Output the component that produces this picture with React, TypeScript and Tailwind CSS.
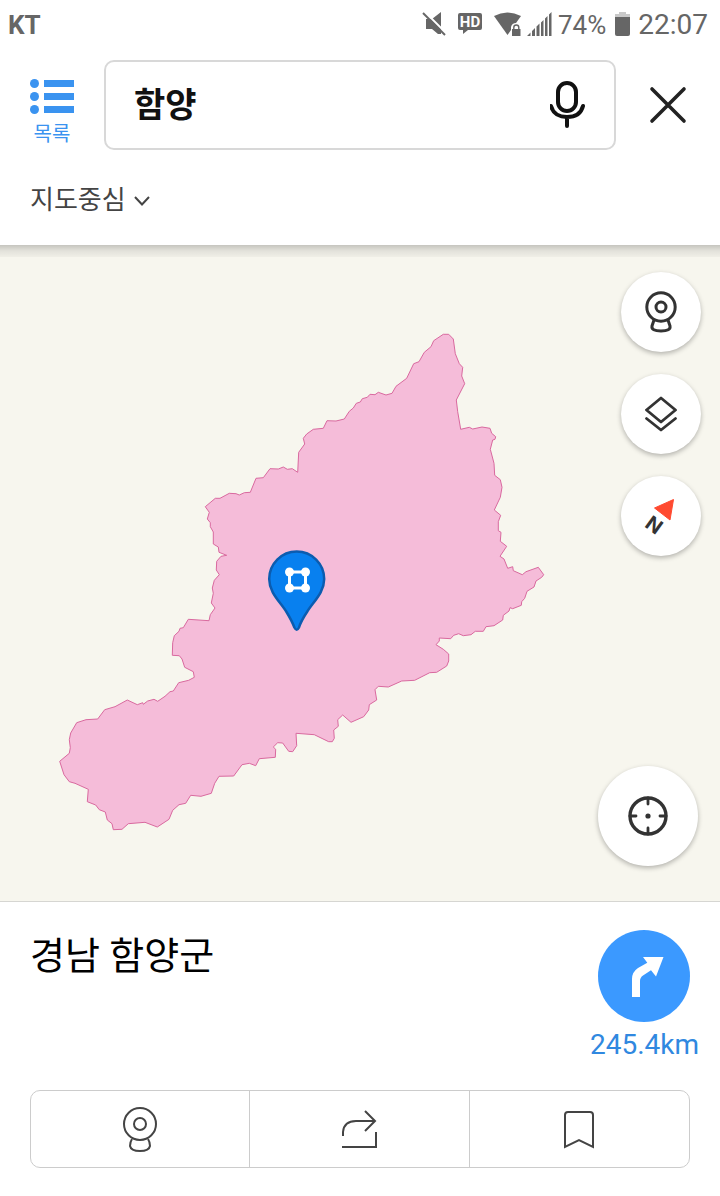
import { useState, type ReactNode } from 'react';

const FONT = "font-['Roboto','Noto_Sans_CJK_KR',sans-serif]";

// Administrative boundary of the county, in map canvas coordinates.
const BOUNDARY =
  'M443.3 334.3L448.7 334.3 453.3 339 455.3 353.7 459.3 363.7 462.7 367.3 461.7 376 464.7 383.7 456.3 400 457.7 411.7 460.7 429.3 469.3 427.3 472.7 429 482 427 490 428.3 491.7 433.3 495.7 436.7 495 439.3 492.7 440 490.3 449.3 494 463.3 494.7 475.3 500.3 479.7 502 487.3 500.3 497.3 494.3 510 500.7 515.3 498.3 521.7 498.3 530.7 501 532.3 500.3 541.3 506.7 546.3 ' +
  '500 556.3 504 559 507.7 568.3 512.7 566.7 513.3 570.7 522.3 574.7 526 571.7 538.3 567.3 543.7 574.7 541.7 577.3 536 581 534 587 527 591.3 524.7 598.3 521.7 601.7 521.3 605.3 512.7 608.7 510 607.7 509 611 503.3 615.3 502.7 620 494 625.7 486 626.7 483.3 631.3 475.3 631.3 471 634.7 463.3 635.7 458.7 633.7 453.7 635.3 450.7 638.7 439.3 638 439.3 641 436 644.7 443.3 649.3 448.7 654 448.7 661 446.7 666 436.7 672.3 429.7 672.7 414.7 680.3 401.7 681 388.3 687 378.3 686.3 375 689.7 376.7 700 369.3 704.7 368.7 710 363.7 716.7 351 722.3 342.7 715 337.7 719.7 338.3 726.3 333.7 730 334.3 738.3 332.3 741.7 328.7 741.7 314.3 734.7 ' +
  '296 733.3 296.7 745.7 292.7 751.7 288.7 751.3 282.7 743 277.7 742.7 273.3 747 275.7 749.3 275.3 757.3 259.3 758.7 255.7 765.7 249.3 763.3 242 764.7 233.7 776 219 776.3 214.7 783.3 211.3 793.3 201 796.3 190.7 795.3 185.7 803.3 179 804.7 172.7 810.3 169 819.3 157.3 827 145 822.3 128.3 823.7 122 829.3 113.3 829.7 112 823.7 107.3 820 105.3 812 99.3 809.7 95.7 805 87.3 801.7 88.3 789.3 75 783.3 69.3 781.7 64 774.7 59.7 761.3 69.3 753.3 70.3 747.7 69.3 739.7 70.7 733 76.7 722.7 86 719.7 97.7 719 104.7 709.7 115 706.7 127.3 700 137.3 704.7 142.7 702.7 143.3 704.3 147.7 701 154 699.3 157.7 701.3 165 696.3 170 691.7 173.3 691 178.7 682.7 188.7 680.3 194.3 677.3 193.3 671.7 184.7 667.3 182 659 179.3 655.7 172.3 655.3 172.7 642.7 174.3 635.7 179 631.3 180 628.3 183.3 627.7 188.3 619.3 209 620.7 210.3 614.7 215 608 211.3 603 213.3 593.3 212.3 588 214.3 580.3 219.3 574.7 216.3 570 216.7 561.3 221 556.3 226.7 555.3 219 552.3 218.3 547 213.3 544 213.3 532 210.3 526.7 210.3 522.7 207.3 519 209.3 512.3 205.3 506.7 215.3 498.3 220 498.3 229.3 493.3 236 493.7 239.3 495 244.3 492.7 ' +
  '250.3 492.3 256 478.3 263.3 477.7 270 468.7 278.3 469 283.3 467 287.3 469.3 292.3 468.7 297.7 472.3 298.7 452.3 304.7 444 303.3 438.3 306.7 434 313.3 429.3 323.3 428.3 327 420.7 336 421 344.3 419 349.3 411.3 353.3 408 356.3 403.3 360.3 402 362.3 398.7 367.3 397.3 370 394.3 375 394.7 378.3 392.3 386 395 392 393.3 396 386.3 406.7 378.3 413.7 363.7 419 361.7 424.3 352.3 431 346.7 433.7 340.7Z';

function StatusBar() {
  return (
    <div className="flex h-[50px] items-center pr-3 pl-2 text-[#666]">
      <span className="flex-1 text-[26px] font-bold">KT</span>
      <svg className="mr-[11px] h-[26px] w-[25px]" viewBox="0 0 25 26">
        <path d="M4 7H10L19 0V22H16L10 17H4Z" fill="currentColor" />
        <path d="M2 -1L25 22" stroke="#fff" strokeWidth="2" />
        <path d="M1 1L23 23" stroke="currentColor" strokeWidth="2" />
      </svg>
      <svg className="mr-3 h-[26px] w-6" viewBox="0 0 24 26">
        <path d="M2 1H22Q24 1 24 3V16Q24 18 22 18H10L5 22V18H2Q0 18 0 16V3Q0 1 2 1Z" fill="currentColor" />
        <text x="12" y="15" textAnchor="middle" fill="#fff" fontSize="15" fontWeight="700">
          HD
        </text>
      </svg>
      <svg className="mr-[6px] h-[26px] w-[27px]" viewBox="0 0 27 26">
        <path d="M0 4Q13 -3 27 4L13.500 23Z" fill="currentColor" />
        <path d="M17 15Q18 11 22 11T27 15V26H17Z" fill="#fff" />
        <path d="M18 17H26.500V24H18Z" fill="currentColor" />
        <path d="M19.800 17V15.500A2.500 2.500 0 0 1 24.800 15.500V17" fill="none" stroke="currentColor" strokeWidth="1.400" />
      </svg>
      <svg className="mr-[6px] h-[26px] w-[25px]" viewBox="0 0 25 26">
        <path
          d="M0 24L3.500 20.500V24ZM5 24V19L8 16V24ZM9.500 24V14.500L12.500 11.500V24ZM14 24V10.500L16.500 8V24ZM18 24V6.500L20.500 4V24ZM22 24V2.500L24.500 0V24Z"
          fill="currentColor"
        />
      </svg>
      <span className="mr-[9px] text-[26px]">74%</span>
      <svg className="mr-2 h-[26px] w-[15px]" viewBox="0 0 15 26">
        <path d="M4 0H11V2H15V6H0V2H4Z" fill="#c9c9c9" />
        <path d="M0 5H15V22Q15 24 13 24H2Q0 24 0 22Z" fill="currentColor" />
      </svg>
      <span className="text-[28px]">22:07</span>
    </div>
  );
}

function SearchHeader() {
  const [query, setQuery] = useState('함양');

  return (
    <div className="flex items-start pt-[10px] pr-[33px] pl-[30px]">
      <button type="button" className="mt-[19px] mr-[30px] flex w-11 flex-col items-center text-[#3a93f0]">
        <svg className="h-9 w-11" viewBox="0 0 44 36" fill="currentColor">
          <circle cx="4.500" cy="4.500" r="4.500" />
          <circle cx="4.500" cy="17.500" r="4.500" />
          <circle cx="4.500" cy="30.500" r="4.500" />
          <path d="M14 1H44V8H14ZM14 14H44V21H14ZM14 27H44V34H14Z" />
        </svg>
        <span className="text-[20px] leading-[38px]">목록</span>
      </button>
      <div className="flex h-[90px] min-w-0 flex-1 items-center rounded-[10px] border-2 border-[#d8d8d8] pr-7 pl-7">
        <input
          type="text"
          aria-label="검색"
          value={query}
          onChange={(e) => setQuery(e.target.value)}
          className="min-w-0 flex-1 bg-transparent text-[34px] font-bold text-[#111] outline-none"
        />
        <button type="button" aria-label="음성 검색">
          <svg className="h-12 w-9" viewBox="0 0 36 48" fill="none" stroke="#111" strokeWidth="4" strokeLinecap="round">
            <rect x="8" y="2" width="18" height="28" rx="9" />
            <path d="M1 25C3 33 9 36 17 36S31 33 33 25M17 36V45" />
          </svg>
        </button>
      </div>
      <button type="button" aria-label="닫기" className="ml-[33px] flex h-[90px] items-center">
        <svg className="h-[38px] w-[38px]" viewBox="0 0 38 38" stroke="#222" strokeWidth="3.600" strokeLinecap="round">
          <path d="M3 3L35 35M35 3L3 35" />
        </svg>
      </button>
    </div>
  );
}

function SortSelect() {
  return (
    <div className="flex h-[92px] items-center px-[30px] pt-[2px]">
      <div className="relative">
        <select aria-label="정렬 기준" className="appearance-none bg-transparent pr-[26px] text-[26px] text-[#444] outline-none">
          <option>지도중심</option>
        </select>
        <svg
          className="pointer-events-none absolute inset-y-0 right-0 my-auto h-4 w-5"
          viewBox="0 0 20 16"
          fill="none"
          stroke="#444"
          strokeWidth="2"
        >
          <path d="M3 5L10 12.500L17 5" />
        </svg>
      </div>
    </div>
  );
}

function MapButton({ label, className, children }: { label: string; className: string; children: ReactNode }) {
  return (
    <button
      type="button"
      aria-label={label}
      className={`flex items-center justify-center rounded-full bg-white shadow-[0_2px_5px_rgba(0,0,0,0.28)] ${className}`}
    >
      {children}
    </button>
  );
}

function MapCanvas() {
  return (
    <main className="relative min-h-[600px] flex-1 overflow-hidden bg-[#f7f6ee]">
      <svg className="absolute inset-0 h-full w-full" viewBox="0 245 720 656">
        <path d={BOUNDARY} fill="#f5bcd9" stroke="#d9699f" strokeWidth="1" />
        <path
          d="M296.700 551.500A27.500 27.500 0 0 1 324.200 579C324.200 593 313 602 307 612Q301 621 299 627.500Q296.700 632 294.400 627.500Q292 621 286.500 612C280.500 602 269.200 593 269.200 579A27.500 27.500 0 0 1 296.700 551.500Z"
          fill="#0880ef"
          stroke="#0b5cb0"
          strokeWidth="2.500"
        />
        <rect x="289.500" y="572" width="16" height="16" fill="none" stroke="#fff" strokeWidth="3" />
        <g fill="#fff">
          <circle cx="289.500" cy="572" r="4.500" />
          <circle cx="305.500" cy="572" r="4.500" />
          <circle cx="289.500" cy="588" r="4.500" />
          <circle cx="305.500" cy="588" r="4.500" />
        </g>
      </svg>

      <div className="absolute inset-x-0 top-0 h-3 bg-linear-to-b from-black/20 via-black/8 to-black/3" />

      <div className="absolute top-[27px] right-[19px] flex flex-col gap-[22px]">
        <MapButton label="거리뷰" className="size-20">
          <svg className="h-[42px] w-8" viewBox="0 0 32 42" fill="none" stroke="#333" strokeWidth="3">
            <circle cx="16" cy="16" r="14.200" />
            <circle cx="16" cy="16" r="5" />
            <path d="M9 29L7 35Q6 40 16 40T25 35L23 29" />
          </svg>
        </MapButton>
        <MapButton label="지도 종류" className="size-20">
          <svg
            className="h-9 w-8"
            viewBox="0 0 32 36"
            fill="none"
            stroke="#333"
            strokeWidth="2.800"
            strokeLinecap="round"
            strokeLinejoin="round"
          >
            <path d="M16 2L30.500 14L16 26L1.500 14ZM1.500 22.500L16 34L30.500 22.500" />
          </svg>
        </MapButton>
        <MapButton label="나침반" className="size-20">
          <svg className="h-20 w-20" viewBox="0 0 80 80">
            <path d="M33.500 32L52.500 23.500L49 44Z" fill="#ff4a30" stroke="#ff4a30" strokeLinejoin="round" />
            <text
              x="33"
              y="56"
              textAnchor="middle"
              transform="rotate(36 33 49)"
              fill="#333"
              fontFamily="Inter, sans-serif"
              fontSize="20"
              fontWeight="700"
            >
              N
            </text>
          </svg>
        </MapButton>
      </div>

      <MapButton label="현재 위치" className="absolute right-[22px] bottom-[35px] size-[100px]">
        <svg className="h-10 w-10" viewBox="0 0 40 40" fill="none" stroke="#333" strokeWidth="3.400">
          <circle cx="20" cy="20" r="18" />
          <path d="M20 2V8M20 32V38M2 20H8M32 20H38" strokeWidth="2.800" strokeLinecap="round" />
          <circle cx="20" cy="20" r="2.600" fill="#333" stroke="none" />
        </svg>
      </MapButton>
    </main>
  );
}

function PlaceSheet() {
  return (
    <section className="border-t border-[#d6d6d2] bg-white pb-7">
      <div className="flex items-start justify-between pt-7 pr-[21px] pl-[30px]">
        <h1 className="text-[38px] leading-[52px] text-black">경남 함양군</h1>
        <a href="#route" className="flex flex-col items-center text-[#3088e0]">
          <span className="size-[92px] rounded-full bg-[#3b99ff]">
            <svg className="h-full w-full" viewBox="-34 -27 92 92">
              <path
                d="M0 40V22Q0 15 6 11L15.300 5.700L11 0H31.500L24 19.500L19 13.300L11 18.500Q8 20.500 8 24V40Z"
                fill="#fff"
              />
            </svg>
          </span>
          <span className="text-[28px] leading-[46px]">245.4km</span>
        </a>
      </div>

      <div className="mx-[30px] mt-[22px] grid h-[78px] grid-cols-3 divide-x divide-[#ccc] rounded-[10px] border border-[#ccc]">
        <button type="button" aria-label="거리뷰" className="flex items-center justify-center">
          <svg className="h-[46px] w-9" viewBox="0 0 36 46" fill="none" stroke="#444" strokeWidth="2">
            <circle cx="18" cy="18" r="16" />
            <circle cx="18" cy="18" r="6" />
            <path d="M10 33Q8 36 8 40Q9 45 18 45T28 40Q28 36 26 33" />
          </svg>
        </button>
        <button type="button" aria-label="공유" className="flex items-center justify-center">
          <svg className="h-10 w-9" viewBox="0 0 36 40" fill="none" stroke="#444" strokeWidth="2">
            <path d="M2 27V23Q3 12 15 12H34M24 2L34 12L24 22M1 38H35V23" />
          </svg>
        </button>
        <button type="button" aria-label="저장" className="flex items-center justify-center">
          <svg className="h-10 w-8" viewBox="0 0 32 40" fill="none" stroke="#444" strokeWidth="2">
            <path d="M2 38V6Q2 3 5 3H27Q30 3 30 6V38L16 31Z" />
          </svg>
        </button>
      </div>
    </section>
  );
}

export default function App() {
  return (
    <div className={`flex min-h-screen flex-col bg-white ${FONT}`}>
      <header className="bg-white">
        <StatusBar />
        <SearchHeader />
        <SortSelect />
      </header>
      <MapCanvas />
      <PlaceSheet />
    </div>
  );
}
